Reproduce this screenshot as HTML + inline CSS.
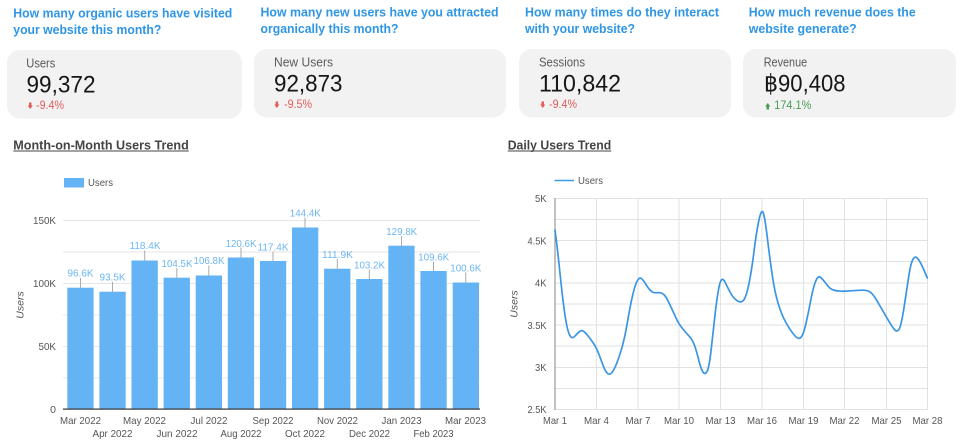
<!DOCTYPE html>
<html lang="en"><head><meta charset="utf-8"><title>Users dashboard</title>
<style>
html,body{margin:0;padding:0;background:#fff;width:960px;height:440px;overflow:hidden}
svg{display:block;filter:blur(.3px)}
text{font-family:"Liberation Sans","DejaVu Sans",sans-serif}
.h{font-size:13px;font-weight:700;fill:#2f96e6}
.s{font-size:13px;font-weight:700;fill:#444}
.l{font-size:12.500px;fill:#5a5a5a}
.v{font-size:24px;fill:#161616}
.r{font-size:11.500px;fill:#e25c5c}
.g{font-size:11.500px;fill:#4a9c56}
.t{font-size:10.500px;fill:#555}
.d{font-size:10.500px;fill:#6db6f3}
.y{font-size:10.500px;fill:#555;font-style:italic}
</style></head><body>
<svg width="960" height="440" viewBox="0 0 960 440" xmlns="http://www.w3.org/2000/svg">
<!-- headings -->
<text class="h" x="13.3" y="17.5" textLength="219" lengthAdjust="spacingAndGlyphs">How many organic users have visited</text>
<text class="h" x="13.3" y="33.8" textLength="148" lengthAdjust="spacingAndGlyphs">your website this month?</text>
<text class="h" x="260.5" y="16.5" textLength="238" lengthAdjust="spacingAndGlyphs">How many new users have you attracted</text>
<text class="h" x="260.5" y="32.8" textLength="138" lengthAdjust="spacingAndGlyphs">organically this month?</text>
<text class="h" x="525" y="16.5" textLength="194" lengthAdjust="spacingAndGlyphs">How many times do they interact</text>
<text class="h" x="525" y="32.8" textLength="110" lengthAdjust="spacingAndGlyphs">with your website?</text>
<text class="h" x="748.7" y="16.5" textLength="167" lengthAdjust="spacingAndGlyphs">How much revenue does the</text>
<text class="h" x="748.7" y="32.8" textLength="108" lengthAdjust="spacingAndGlyphs">website generate?</text>
<!-- cards -->
<rect x="7" y="50" width="235" height="68.5" rx="13" fill="#f2f2f2"/>
<rect x="254" y="49" width="252" height="68.5" rx="13" fill="#f2f2f2"/>
<rect x="519" y="49" width="212" height="68.5" rx="13" fill="#f2f2f2"/>
<rect x="743" y="49" width="213" height="68.5" rx="13" fill="#f2f2f2"/>
<text class="l" x="26.3" y="67.5" textLength="29" lengthAdjust="spacingAndGlyphs">Users</text>
<text class="l" x="274" y="66.5" textLength="59" lengthAdjust="spacingAndGlyphs">New Users</text>
<text class="l" x="539" y="66.5" textLength="46" lengthAdjust="spacingAndGlyphs">Sessions</text>
<text class="l" x="763.7" y="66.5" textLength="43.5" lengthAdjust="spacingAndGlyphs">Revenue</text>
<text class="v" x="26.5" y="92.5" textLength="69" lengthAdjust="spacingAndGlyphs">99,372</text>
<text class="v" x="274" y="91.5" textLength="68.5" lengthAdjust="spacingAndGlyphs">92,873</text>
<text class="v" x="539" y="91.5" textLength="82" lengthAdjust="spacingAndGlyphs">110,842</text>
<text class="v" x="764" y="91.5" textLength="81.5" lengthAdjust="spacingAndGlyphs">฿90,408</text>
<path d="M29 102.500h2.500v3h1.300l-2.550 3.500-2.550-3.500h1.300z" fill="#e25c5c"/>
<text class="r" x="36" y="109" textLength="28" lengthAdjust="spacingAndGlyphs">-9.4%</text>
<path d="M275.600 101.500h2.500v3h1.300l-2.550 3.500-2.550-3.500h1.300z" fill="#e25c5c"/>
<text class="r" x="284" y="108" textLength="28" lengthAdjust="spacingAndGlyphs">-9.5%</text>
<path d="M541.500 101.500h2.500v3h1.300l-2.550 3.500-2.550-3.500h1.300z" fill="#e25c5c"/>
<text class="r" x="549" y="108" textLength="28" lengthAdjust="spacingAndGlyphs">-9.4%</text>
<path d="M766.500 109.500h2.500v-3h1.300l-2.550-3.500-2.550 3.500h1.300z" fill="#4a9c56"/>
<text class="g" x="774.300" y="109" textLength="37" lengthAdjust="spacingAndGlyphs">174.1%</text>
<!-- section titles -->
<text class="s" x="13.3" y="149.500" textLength="175.500" lengthAdjust="spacingAndGlyphs">Month-on-Month Users Trend</text>
<rect x="13.3" y="150.500" width="175.500" height="1" fill="#444"/>
<text class="s" x="507.700" y="149.500" textLength="103.500" lengthAdjust="spacingAndGlyphs">Daily Users Trend</text>
<rect x="507.700" y="150.500" width="103.500" height="1" fill="#444"/>

<!-- LEFT CHART -->
<rect x="64" y="178" width="20" height="9.500" fill="#64b3f5"/>
<text class="t" x="88" y="186" textLength="25" lengthAdjust="spacingAndGlyphs">Users</text>
<g stroke="#e6e6e6" stroke-width="1">
<path d="M63 220.500H480M63 252H480M63 283.500H480M63 315H480M63 346.500H480M63 378H480"/>
</g>
<g fill="#64b3f5">
<rect x="67.300" y="287.700" width="26.300" height="121.300"/>
<rect x="99.400" y="291.700" width="26.300" height="117.300"/>
<rect x="131.500" y="260.500" width="26.300" height="148.500"/>
<rect x="163.600" y="277.700" width="26.300" height="131.300"/>
<rect x="195.700" y="275.500" width="26.300" height="133.500"/>
<rect x="227.800" y="257.500" width="26.300" height="151.500"/>
<rect x="259.900" y="261" width="26.300" height="148"/>
<rect x="292" y="227.500" width="26.300" height="181.500"/>
<rect x="324.100" y="268.700" width="26.300" height="140.300"/>
<rect x="356.200" y="279" width="26.300" height="130"/>
<rect x="388.300" y="245.700" width="26.300" height="163.300"/>
<rect x="420.400" y="271" width="26.300" height="138"/>
<rect x="452.700" y="282.500" width="26.300" height="126.500"/>
</g>
<g stroke="#aaa" stroke-width="1">
<path d="M80.500 278V287.700M112.500 282V291.700M144.700 250.500V260.500M176.800 268V277.700M208.800 265.500V275.500M241 247.500V257.500M273 251.500V261M305 217.500V227.500M337.300 259V268.700M369.300 269.500V279M401.500 236V245.700M433.500 261.500V271M465.800 272.500V282.500"/>
</g>
<rect x="63" y="408.500" width="417" height="1.200" fill="#333"/>
<g text-anchor="middle">
<text class="d" x="80.500" y="276.500" textLength="26" lengthAdjust="spacingAndGlyphs">96.6K</text>
<text class="d" x="112.500" y="280.500" textLength="26" lengthAdjust="spacingAndGlyphs">93.5K</text>
<text class="d" x="145" y="249" textLength="31" lengthAdjust="spacingAndGlyphs">118.4K</text>
<text class="d" x="177" y="267" textLength="31" lengthAdjust="spacingAndGlyphs">104.5K</text>
<text class="d" x="209" y="264" textLength="31" lengthAdjust="spacingAndGlyphs">106.8K</text>
<text class="d" x="241" y="247" textLength="31" lengthAdjust="spacingAndGlyphs">120.6K</text>
<text class="d" x="273" y="250.500" textLength="31" lengthAdjust="spacingAndGlyphs">117.4K</text>
<text class="d" x="305.300" y="216.500" textLength="31" lengthAdjust="spacingAndGlyphs">144.4K</text>
<text class="d" x="337.500" y="258" textLength="31" lengthAdjust="spacingAndGlyphs">111.9K</text>
<text class="d" x="369.500" y="268.500" textLength="31" lengthAdjust="spacingAndGlyphs">103.2K</text>
<text class="d" x="401.700" y="235" textLength="31" lengthAdjust="spacingAndGlyphs">129.8K</text>
<text class="d" x="433.700" y="260.500" textLength="31" lengthAdjust="spacingAndGlyphs">109.6K</text>
<text class="d" x="465.800" y="271.500" textLength="31" lengthAdjust="spacingAndGlyphs">100.6K</text>
</g>
<g text-anchor="end">
<text class="t" x="56" y="224" textLength="23" lengthAdjust="spacingAndGlyphs">150K</text>
<text class="t" x="56" y="287" textLength="23" lengthAdjust="spacingAndGlyphs">100K</text>
<text class="t" x="56" y="350" textLength="17.500" lengthAdjust="spacingAndGlyphs">50K</text>
<text class="t" x="56" y="413">0</text>
</g>
<text class="y" transform="translate(23.500 305) rotate(-90)" text-anchor="middle">Users</text>
<g text-anchor="middle">
<text class="t" x="80.500" y="424" textLength="41" lengthAdjust="spacingAndGlyphs">Mar 2022</text>
<text class="t" x="112.500" y="437" textLength="40" lengthAdjust="spacingAndGlyphs">Apr 2022</text>
<text class="t" x="144.500" y="424" textLength="43" lengthAdjust="spacingAndGlyphs">May 2022</text>
<text class="t" x="177" y="437" textLength="41" lengthAdjust="spacingAndGlyphs">Jun 2022</text>
<text class="t" x="209" y="424" textLength="37" lengthAdjust="spacingAndGlyphs">Jul 2022</text>
<text class="t" x="241" y="437" textLength="41" lengthAdjust="spacingAndGlyphs">Aug 2022</text>
<text class="t" x="273" y="424" textLength="41" lengthAdjust="spacingAndGlyphs">Sep 2022</text>
<text class="t" x="305" y="437" textLength="40" lengthAdjust="spacingAndGlyphs">Oct 2022</text>
<text class="t" x="337.500" y="424" textLength="41" lengthAdjust="spacingAndGlyphs">Nov 2022</text>
<text class="t" x="369.500" y="437" textLength="41" lengthAdjust="spacingAndGlyphs">Dec 2022</text>
<text class="t" x="401.500" y="424" textLength="40" lengthAdjust="spacingAndGlyphs">Jan 2023</text>
<text class="t" x="433.500" y="437" textLength="40" lengthAdjust="spacingAndGlyphs">Feb 2023</text>
<text class="t" x="465.500" y="424" textLength="41" lengthAdjust="spacingAndGlyphs">Mar 2023</text>
</g>

<!-- RIGHT CHART -->
<path d="M554.500 180.500H574" stroke="#3f9ae6" stroke-width="1.600" fill="none"/>
<text class="t" x="578" y="184" textLength="25" lengthAdjust="spacingAndGlyphs">Users</text>
<g stroke="#e2e2e2" stroke-width="1" fill="none">
<path d="M555 198.500H927M555 219.500H927M555 240.500H927M555 261.500H927M555 283H927M555 304H927M555 325H927M555 346H927M555 367.500H927M555 388.500H927M555 409.500H927"/>
<path d="M596.500 198V410M638 198V410M679 198V410M720.500 198V410M762 198V410M803.500 198V410M844.500 198V410M886.500 198V410M927.500 198V410"/>
</g>
<path d="M555 198V410" stroke="#999" stroke-width="1.200"/>
<path fill="none" stroke="#3a96e4" stroke-width="1.700" stroke-linejoin="round" stroke-linecap="round" d="M555,230 L556.7,243.4 Q558.3,256.7 560,273.4 Q561.7,290 563.4,303.4 Q565,316.7 566.7,325 Q568.3,333.3 570.3,336.2 Q572.3,339 574.5,336.5 Q576.7,334 579.2,331.8 Q581.7,329.5 584.2,331.8 Q586.7,334 589.2,337.4 Q591.7,340.7 594.2,344.5 Q596.7,348.3 599.2,355 Q601.7,361.7 603.4,366.2 Q605,370.7 607.2,373.1 Q609.3,375.5 611.7,372.8 Q614,370 616.7,363.4 Q619.3,356.7 622.2,346.7 Q625,336.7 627.5,321.7 Q630,306.7 632.5,295.9 Q635,285 637.2,281 Q639.3,277 641.3,278.5 Q643.3,280 645.8,284.2 Q648.3,288.3 650.5,290.5 Q652.7,292.7 654.7,292.7 Q656.7,292.7 659.2,292.7 Q661.7,292.7 663.7,294.4 Q665.7,296 668.7,302.2 Q671.7,308.3 675,315.8 Q678.3,323.3 681.7,327.5 Q685,331.7 688.9,335.9 Q692.7,340 694.7,345.9 Q696.7,351.7 698.7,360 Q700.7,368.3 702.9,371.9 Q705,375.5 707.2,371.1 Q709.3,366.7 711.3,348.4 Q713.3,330 715,315 Q716.7,300 718.4,290.4 Q720,280.7 721.7,279.6 Q723.3,278.5 725.3,282.6 Q727.3,286.7 730.3,292.5 Q733.3,298.3 737.5,300.9 Q741.7,303.5 744.2,299.3 Q746.7,295 749.2,282.5 Q751.7,270 754.2,250 Q756.7,230 759.2,219 Q761.7,208 763.4,213.2 Q765,218.3 767.5,239.2 Q770,260 772.5,276.7 Q775,293.3 778.4,304.2 Q781.7,315 785.9,322.5 Q790,330 794.2,335 Q798.3,340 800.8,337.5 Q803.3,335 805.8,324.2 Q808.3,313.3 810.8,300 Q813.3,286.7 815.8,280.9 Q818.3,275 820.8,277.5 Q823.3,280 826.7,284.5 Q830,289 833.4,290 Q836.7,291 840.9,291.2 Q845,291.3 850.9,290.8 Q856.7,290.3 861.7,290.2 Q866.7,290 869.7,291.7 Q872.7,293.3 878,302.5 Q883.3,311.7 887.5,318.9 Q891.7,326 894.2,329.3 Q896.7,332.5 898.9,329.6 Q901,326.7 903.9,308.4 Q906.7,290 908.7,276.7 Q910.7,263.3 912.9,259.4 Q915,255.5 917.5,258.3 Q920,261 923.7,269.5 L927.3,278"/>
<g text-anchor="end">
<text class="t" x="546.500" y="202" textLength="11.500" lengthAdjust="spacingAndGlyphs">5K</text>
<text class="t" x="546.500" y="244.500" textLength="19" lengthAdjust="spacingAndGlyphs">4.5K</text>
<text class="t" x="546.500" y="286.500" textLength="11.500" lengthAdjust="spacingAndGlyphs">4K</text>
<text class="t" x="546.500" y="329" textLength="19" lengthAdjust="spacingAndGlyphs">3.5K</text>
<text class="t" x="546.500" y="371" textLength="11.500" lengthAdjust="spacingAndGlyphs">3K</text>
<text class="t" x="546.500" y="413" textLength="19" lengthAdjust="spacingAndGlyphs">2.5K</text>
</g>
<text class="y" transform="translate(517.500 304) rotate(-90)" text-anchor="middle">Users</text>
<g text-anchor="middle">
<text class="t" x="555" y="424" textLength="24" lengthAdjust="spacingAndGlyphs">Mar 1</text>
<text class="t" x="596.500" y="424" textLength="25" lengthAdjust="spacingAndGlyphs">Mar 4</text>
<text class="t" x="638" y="424" textLength="25" lengthAdjust="spacingAndGlyphs">Mar 7</text>
<text class="t" x="679" y="424" textLength="30" lengthAdjust="spacingAndGlyphs">Mar 10</text>
<text class="t" x="720.500" y="424" textLength="30" lengthAdjust="spacingAndGlyphs">Mar 13</text>
<text class="t" x="762" y="424" textLength="30" lengthAdjust="spacingAndGlyphs">Mar 16</text>
<text class="t" x="803.500" y="424" textLength="30" lengthAdjust="spacingAndGlyphs">Mar 19</text>
<text class="t" x="844.500" y="424" textLength="30" lengthAdjust="spacingAndGlyphs">Mar 22</text>
<text class="t" x="886.500" y="424" textLength="30" lengthAdjust="spacingAndGlyphs">Mar 25</text>
<text class="t" x="927.500" y="424" textLength="30" lengthAdjust="spacingAndGlyphs">Mar 28</text>
</g>
</svg>
</body></html>
